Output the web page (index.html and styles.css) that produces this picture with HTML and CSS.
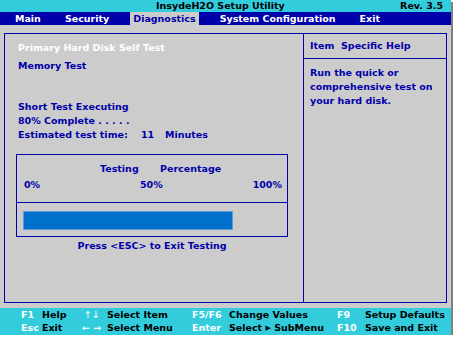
FILE: index.html
```html
<!DOCTYPE html>
<html>
<head>
<meta charset="utf-8">
<link rel="stylesheet" href="styles.css">
</head>
<body>
<div class="screen">
  <header class="titlebar">
    <span class="title">InsydeH2O Setup Utility</span>
    <span class="rev">Rev. 3.5</span>
  </header>
  <nav class="menubar">
    <span class="menu-item">Main</span>
    <span class="menu-item">Security</span>
    <span class="menu-item active">Diagnostics</span>
    <span class="menu-item">System Configuration</span>
    <span class="menu-item">Exit</span>
  </nav>
  <main class="content">
    <div class="frame">
      <section class="left">
        <div class="line selected">Primary Hard Disk Self Test</div>
        <div class="line second">Memory Test</div>
        <div class="line status-first">Short Test Executing</div>
        <div class="line">80% Complete . . . . .</div>
        <div class="line est">
          <span>Estimated test time:</span>
          <span>11</span>
          <span>Minutes</span>
        </div>
        <div class="testbox">
          <div class="testbox-top">
            <div class="head-row">
              <span>Testing</span>
              <span>Percentage</span>
            </div>
            <div class="scale-row">
              <span>0%</span>
              <span>50%</span>
              <span>100%</span>
            </div>
          </div>
          <div class="testbox-bottom">
            <div class="track">
              <div class="fill" style="width: 80%"></div>
            </div>
          </div>
        </div>
        <div class="esc-note">Press &lt;ESC&gt; to Exit Testing</div>
      </section>
      <aside class="help">
        <div class="help-title">Item  Specific Help</div>
        <div class="help-body">
          <div class="line">Run the quick or</div>
          <div class="line">comprehensive test on</div>
          <div class="line">your hard disk.</div>
        </div>
      </aside>
    </div>
  </main>
  <footer class="keybar">
    <span class="key">F1</span><span class="desc">Help</span>
    <span class="key arrow">↑↓</span><span class="desc">Select Item</span>
    <span class="key">F5/F6</span><span class="desc">Change Values</span>
    <span class="key">F9</span><span class="desc">Setup Defaults</span>
    <span class="key">Esc</span><span class="desc">Exit</span>
    <span class="key arrow">← →</span><span class="desc">Select Menu</span>
    <span class="key">Enter</span><span class="desc">Select <span class="tri">▶</span> SubMenu</span>
    <span class="key">F10</span><span class="desc">Save and Exit</span>
  </footer>
</div>
</body>
</html>
```
FILE: styles.css
```css
* { box-sizing: border-box; }
html, body {
  margin: 0;
  padding: 0;
  background: #ffffff;
}
body {
  font-family: "DejaVu Sans", sans-serif;
  font-weight: bold;
  font-size: 9.5px;
  color: #0000aa;
}
.screen {
  width: 451px;
  height: 335px;
  display: flex;
  flex-direction: column;
  background: #cccccc;
  box-shadow: 2px 2px 0 #808080;
}
.titlebar {
  height: 12px;
  background: #33ccdd;
  color: #000000;
  display: flex;
  justify-content: space-between;
  align-items: center;
  padding: 0 8px 0 156px;
  line-height: 12px;
}
.menubar {
  height: 13px;
  background: #0000aa;
  display: flex;
  align-items: stretch;
  padding-left: 3px;
  line-height: 13px;
}
.menu-item {
  color: #ffffff;
  margin: 0 9px;
  padding: 0 3px;
}
.menu-item.active {
  background: #cccccc;
  color: #0000aa;
}
.content {
  flex: 1;
  padding: 8px 4px 5px 4px;
}
.frame {
  height: 100%;
  border: 1px solid #0000aa;
  display: flex;
}
.left {
  width: 299px;
  border-right: 1px solid #0000aa;
  padding: 7px 0 0 13px;
  display: flex;
  flex-direction: column;
}
.line {
  line-height: 14px;
  white-space: pre;
}
.selected { color: #ffffff; margin-bottom: 4px; }
.status-first { margin-top: 27px; }
.est {
  display: grid;
  grid-template-columns: 123px 24px auto;
}
.testbox {
  margin: 12px 0 0 -2px;
  width: 272px;
  border: 1px solid #0000aa;
}
.testbox-top {
  padding: 7px 0 10px 0;
  border-bottom: 1px solid #0000aa;
  line-height: 14px;
}
.head-row {
  display: grid;
  grid-template-columns: 60px auto;
  padding-left: 83px;
  margin-bottom: 2px;
}
.scale-row {
  display: grid;
  grid-template-columns: 116px 1fr auto;
  padding: 0 5px 0 7px;
}
.testbox-bottom {
  padding: 8px 2px 6px 6px;
}
.track {
  height: 19px;
}
.fill {
  height: 100%;
  background: #0070cc;
  border: 1px solid #5f9bd3;
}
.esc-note {
  width: 272px;
  margin: 2px 0 0 -2px;
  text-align: center;
  line-height: 14px;
}
.help {
  flex: 1;
  display: flex;
  flex-direction: column;
}
.help-title {
  height: 25px;
  line-height: 24px;
  padding-left: 6px;
  border-bottom: 1px solid #0000aa;
  white-space: pre;
}
.help-body {
  padding: 7px 0 0 6px;
}
.keybar {
  height: 27px;
  background: #33ccdd;
  display: grid;
  grid-template-columns: 21px 40px 25px 85px 37px 108px 28px auto;
  grid-auto-rows: 13px;
  line-height: 13px;
  padding-left: 21px;
  color: #000000;
  white-space: pre;
}
.key { color: #ffffff; }
.key.arrow {
  text-align: right;
  padding-right: 7px;
  font-weight: normal;
}
.tri { font-size: 7px; vertical-align: 1px; }
```
